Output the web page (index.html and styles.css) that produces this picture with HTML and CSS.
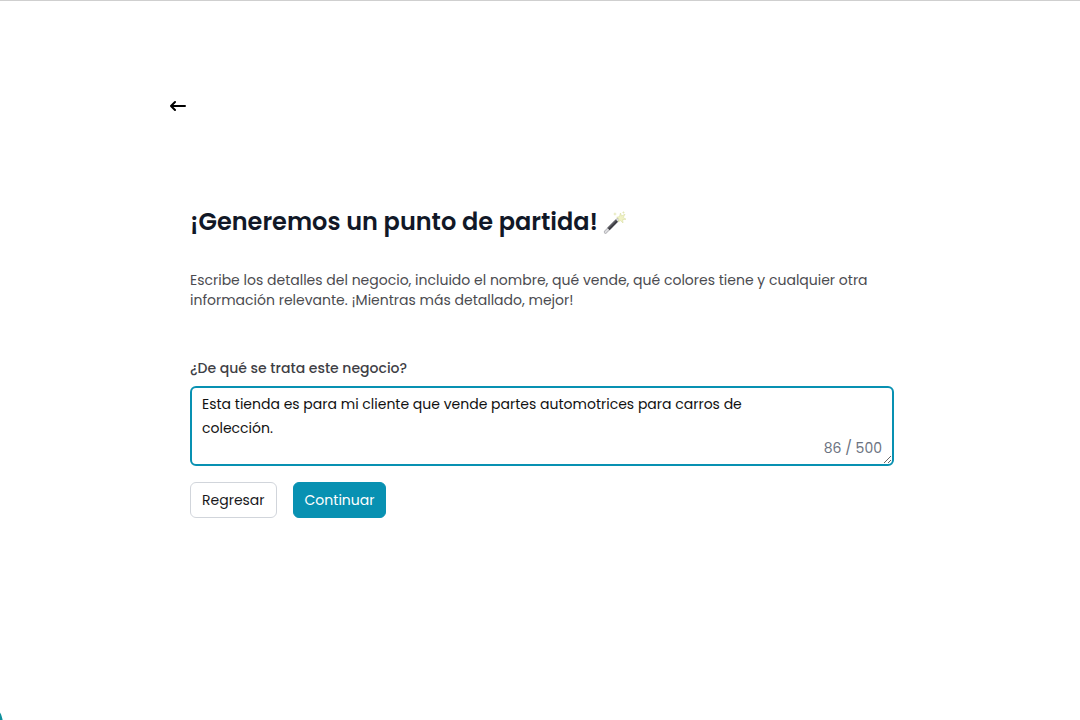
FILE: index.html
```html
<!DOCTYPE html>
<html lang="es">
<head>
    <meta charset="UTF-8">
    <meta name="viewport" content="width=device-width, initial-scale=1.0">
    <title>Generar punto de partida</title>
    <link rel="stylesheet" href="styles.css">
</head>
<body>
    <main class="page">
        <a class="back" href="#" aria-label="Regresar">
            <svg width="16" height="12" viewBox="0 0 16 12" fill="none" stroke="currentColor" stroke-width="2" stroke-linecap="round" stroke-linejoin="round">
                <path d="M15 6H1M5 2L1 6l4 4"/>
            </svg>
        </a>

        <form class="content">
            <h1 class="title">
                ¡Generemos un punto de partida!
                <svg class="wand" width="24" height="24" viewBox="0 0 24 24">
                    <path d="M2.500 22L15.500 9" stroke="#a9a9ad" stroke-width="3.200" stroke-linecap="round"/>
                    <path d="M2.500 22L15.500 9" stroke="#dcdcdf" stroke-width="2" stroke-linecap="round"/>
                    <path d="M5.500 19L13.800 10.700" stroke="#3c3c42" stroke-width="3.200"/>
                    <path d="M5 18.400L13.200 10.200" stroke="#85858b" stroke-width=".8"/>
                    <path d="M17.500 3l1 3 3.500-1.800-1.800 3.300 2.800 1.700-3.300.4.300 3.400-2.400-2.400-2.300 1.200.7-2.900-2.300-1.600 2.800-.7z" fill="#f0f2c4" stroke="#d9dda4" stroke-width=".6"/>
                    <path d="M12 2l.5 1.500 1.500.5-1.500.6L12 6l-.6-1.400L10 4l1.400-.5zM20.500 1l.4 1.100 1.100.4-1.100.5-.4 1-.5-1-1-.5 1-.4z" fill="#e4e7b4"/>
                </svg>
            </h1>
            <p class="intro">Escribe los detalles del negocio, incluido el nombre, qué vende, qué colores tiene y cualquier otra información relevante. ¡Mientras más detallado, mejor!</p>

            <label class="label" for="business">¿De qué se trata este negocio?</label>
            <div class="field">
                <textarea id="business" maxlength="500">Esta tienda es para mi cliente que vende partes automotrices para carros de colección.</textarea>
                <span class="counter">86 / 500</span>
            </div>

            <div class="actions">
                <button class="btn" type="button">Regresar</button>
                <button class="btn btn-primary" type="submit">Continuar</button>
            </div>
        </form>
    </main>
    <div class="bubble"></div>
</body>
</html>
```
FILE: styles.css
```css
* {
    box-sizing: border-box;
}
body {
    margin: 0;
    border-top: 1px solid #cfcfcf;
    background-color: #fff;
    color: #111827;
    font-family: Poppins, Inter, "Liberation Sans", sans-serif;
    font-size: 14px;
    line-height: 20px;
}
.page {
    max-width: 740px;
    margin: 0 auto;
    padding-top: 99px;
}
.back {
    display: block;
    width: 16px;
    color: #000;
}
.back svg {
    display: block;
}
.content {
    padding: 94px 16px 0 20px;
}
.title {
    display: flex;
    align-items: center;
    gap: 5px;
    margin: 0;
    font-size: 24px;
    line-height: 32px;
    font-weight: 600;
}
.intro {
    margin: 32px 0 48px;
    color: #4b4b50;
}
.label {
    display: block;
    margin-bottom: 8px;
    color: #3f3f46;
    font-weight: 500;
}
.field {
    position: relative;
}
.field textarea {
    display: block;
    width: 100%;
    height: 80px;
    padding: 4px 128px 4px 10px;
    border: 2px solid #0891b2;
    border-radius: 6px;
    outline: none;
    background-color: #fff;
    color: #111;
    font: inherit;
    line-height: 24px;
    resize: vertical;
}
.counter {
    position: absolute;
    right: 12px;
    bottom: 8px;
    color: #6b7280;
}
.actions {
    display: flex;
    gap: 16px;
    margin-top: 16px;
}
.btn {
    height: 36px;
    padding: 0 11px;
    border: 1px solid #d1d5db;
    border-radius: 6px;
    background-color: #fff;
    color: #18181b;
    font: inherit;
    cursor: pointer;
}
.btn-primary {
    border-color: #0891b2;
    background-color: #0891b2;
    color: #fff;
}
.bubble {
    position: fixed;
    left: -45px;
    bottom: -28px;
    width: 48px;
    height: 48px;
    border-radius: 50%;
    background-color: #0e8f9c;
}
```
